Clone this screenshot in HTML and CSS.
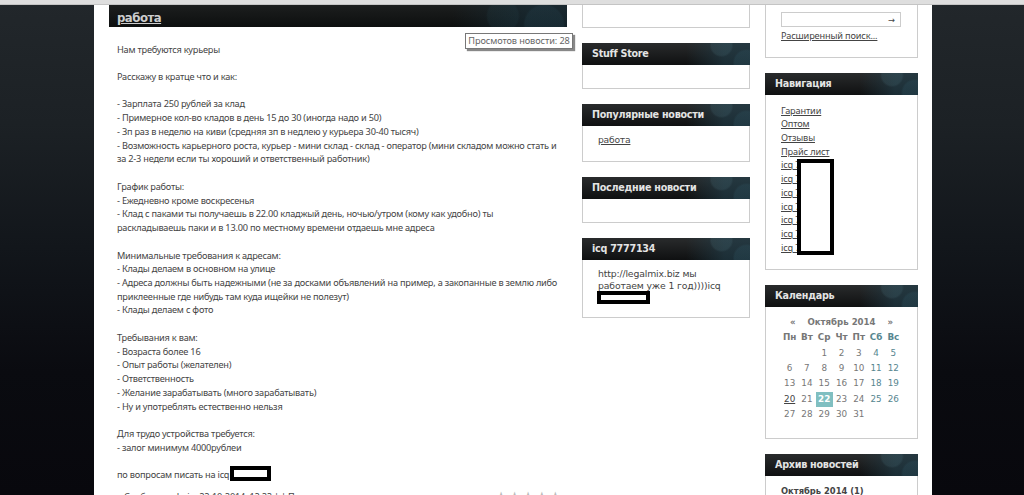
FILE: index.html
```html
<!DOCTYPE html>
<html lang="ru">
  <head>
    <meta charset="UTF-8" />
    <title>работа</title>
    <link rel="stylesheet" href="styles.css">
  </head>
  <body>
    <div class="topbar"></div>
    <div class="page">
      <div class="content">
        <h1 class="bar title"><a href="#">работа</a></h1>
        <div class="story">
          <p>Нам требуются курьеры</p>
          <p>Расскажу в кратце что и как:</p>
          <p>- Зарплата 250 рублей за клад<br>
          - Примерное кол-во кладов в день 15 до 30 (иногда надо и 50)<br>
          - Зп раз в неделю на киви (средняя зп в недлею у курьера 30-40 тысяч)<br>
          - Возможность карьерного роста, курьер - мини склад - склад - оператор (мини складом можно стать и<br>
          за 2-3 недели если ты хороший и ответственный работник)</p>
          <p>График работы:<br>
          - Ежедневно кроме воскресенья<br>
          - Клад с паками ты получаешь в 22.00 кладжый день, ночью/утром (кому как удобно) ты<br>
          раскладываешь паки и в 13.00 по местному времени отдаешь мне адреса</p>
          <p>Минимальные требования к адресам:<br>
          - Клады делаем в основном на улице<br>
          - Адреса должны быть надежными (не за досками объявлений на пример, а закопанные в землю либо<br>
          приклеенные где нибудь там куда ищейки не полезут)<br>
          - Клады делаем с фото</p>
          <p>Требывания к вам:<br>
          - Возраста более 16<br>
          - Опыт работы (желателен)<br>
          - Ответственность<br>
          - Желание зарабатывать (много зарабатывать)<br>
          - Ну и употреблять естественно нельзя</p>
          <p>Для трудо устройства требуется:<br>
          - залог минимум 4000рублеи</p>
          <p class="contact">по вопросам писать на icq <span class="blank"></span></p>
        </div>
        <div class="info">
          <span>Сообщил: admin, 22-10-2014, 12:22 | | Пр</span>
          <span class="stars">★★★★★</span>
        </div>
        <div class="tooltip">Просмотов новости: 28</div>
      </div>

      <div class="middle">
        <div class="block first"></div>
        <div class="block store">
          <h2 class="bar">Stuff Store</h2>
        </div>
        <div class="block popular">
          <h2 class="bar">Популярные новости</h2>
          <a href="#">работа</a>
        </div>
        <div class="block latest">
          <h2 class="bar">Последние новости</h2>
        </div>
        <div class="block about">
          <h2 class="bar">icq 7777134</h2>
          <p>http://legalmix.biz мы<br>работаем уже 1 год))))icq</p>
          <span class="blank"></span>
        </div>
      </div>

      <div class="right">
        <div class="block search">
          <div class="field">→</div>
          <a href="#">Расширенный поиск...</a>
        </div>
        <div class="block nav">
          <h2 class="bar">Навигация</h2>
          <ul>
            <li><a href="#">Гарантии</a></li>
            <li><a href="#">Оптом</a></li>
            <li><a href="#">Отзывы</a></li>
            <li><a href="#">Прайс лист</a></li>
            <li><a href="#">icq 7</a></li>
            <li><a href="#">icq 7</a></li>
            <li><a href="#">icq 7</a></li>
            <li><a href="#">icq 7</a></li>
            <li><a href="#">icq 7</a></li>
            <li><a href="#">icq 7</a></li>
            <li><a href="#">icq 7</a></li>
          </ul>
          <div class="cover"></div>
        </div>
        <div class="block calendar">
          <h2 class="bar">Календарь</h2>
          <div class="month"><b>«</b><b>Октябрь 2014</b><b>»</b></div>
          <table>
            <tr><th>Пн</th><th>Вт</th><th>Ср</th><th>Чт</th><th>Пт</th><th class="off">Сб</th><th class="off">Вс</th></tr>
            <tr><td></td><td></td><td>1</td><td>2</td><td>3</td><td class="off">4</td><td class="off">5</td></tr>
            <tr><td>6</td><td>7</td><td>8</td><td>9</td><td>10</td><td class="off">11</td><td class="off">12</td></tr>
            <tr><td>13</td><td>14</td><td>15</td><td>16</td><td>17</td><td class="off">18</td><td class="off">19</td></tr>
            <tr><td><a href="#">20</a></td><td>21</td><td class="today">22</td><td>23</td><td>24</td><td class="off">25</td><td class="off">26</td></tr>
            <tr><td>27</td><td>28</td><td>29</td><td>30</td><td>31</td><td></td><td></td></tr>
          </table>
        </div>
        <div class="block archive">
          <h2 class="bar">Архив новостей</h2>
          <b>Октябрь 2014 (1)</b>
        </div>
      </div>
    </div>
  </body>
</html>
```

FILE: styles.css
```css
* {
  box-sizing: border-box;
}
body {
  margin: 0;
  height: 495px;
  overflow: hidden;
  background: linear-gradient(#22272b, #1c2125 25%, #12161b 50%, #0a0b10 75%, #08080d);
  font-family: "Noto Sans", "DejaVu Sans Condensed", sans-serif;
  font-size: 9.2px;
  letter-spacing: -0.22px;
  color: #444;
}
a {
  color: #444;
}
p,
h1,
h2,
ul {
  margin: 0;
  padding: 0;
}
.topbar {
  height: 5px;
  background: #dedede;
  border-bottom: 1px solid #c4c4c4;
}
.page {
  display: flex;
  width: 838px;
  height: 490px;
  margin-left: 94px;
  padding-left: 15px;
  background: #fff;
}
.bar {
  height: 22px;
  padding-left: 10px;
  background:
    radial-gradient(circle at 83% 10%, rgba(75, 110, 120, 0.22) 0 10px, transparent 12px),
    radial-gradient(circle at 98% 90%, rgba(50, 90, 105, 0.25) 0 12px, transparent 14px),
    linear-gradient(90deg, transparent 62%, rgba(35, 65, 78, 0.6) 85%),
    linear-gradient(#292b2c, #0f1011);
  color: #e4e4e4;
  font: bold 9.6px/22px "DejaVu Sans", sans-serif;
  letter-spacing: -0.25px;
}

/* article */
.content {
  position: relative;
  width: 458px;
  margin-right: 15px;
}
.title {
  padding-left: 8px;
  font: bold 13px/25px "DejaVu Sans Condensed", sans-serif;
  letter-spacing: -0.5px;
  background:
    radial-gradient(circle at 86% 50%, rgba(40, 75, 85, 0.16) 0 15px, transparent 17px),
    radial-gradient(circle at 95% 90%, rgba(45, 80, 95, 0.18) 0 19px, transparent 21px),
    linear-gradient(90deg, transparent 75%, rgba(25, 50, 62, 0.55) 92%),
    linear-gradient(#1c1e1e, #0d0f0f);
}
.title a {
  color: #ccc;
}
.story {
  padding: 15.5px 0 0 8px;
  line-height: 13.74px;
  white-space: nowrap;
}
.story p {
  margin-bottom: 13.74px;
}
.blank {
  display: inline-block;
  border: 4px solid #000;
  background: #fff;
}
.contact {
  display: flex;
  align-items: center;
  height: 14px;
}
.contact .blank {
  width: 41px;
  height: 15px;
  margin: -3px 0 0 1px;
}
.info {
  display: flex;
  justify-content: space-between;
  padding: 0 4px 0 15px;
  margin-top: -6px;
  line-height: 14px;
  white-space: nowrap;
}
.stars {
  color: #bbb;
  font: 13px/14px "DejaVu Sans", sans-serif;
  letter-spacing: 1.9px;
}
.tooltip {
  position: absolute;
  left: 356px;
  top: 28px;
  width: 108px;
  height: 16px;
  border: 1px solid #777;
  background: #fff;
  box-shadow: 2px 2px 1px #888;
  color: #666;
  letter-spacing: -0.1px;
  line-height: 14px;
  text-align: center;
  white-space: nowrap;
}

/* side columns */
.middle {
  width: 168px;
  margin-right: 15px;
}
.right {
  width: 153px;
}
.block {
  position: relative;
  margin-bottom: 15px;
  border: 1px solid #ccc;
  border-top: 0;
  white-space: nowrap;
}
.block .bar {
  margin: 0 -1px;
}
.first {
  height: 23px;
}
.store,
.latest {
  height: 46px;
}
.popular {
  height: 58px;
}
.popular a {
  display: block;
  padding: 8px 0 0 15px;
  font: 9.2px/12px "DejaVu Sans", sans-serif;
}
.about {
  height: 80px;
}
.about p {
  padding: 8px 0 0 15px;
  font: 9.3px/11.6px "DejaVu Sans", sans-serif;
  letter-spacing: -0.15px;
}
.about .blank {
  display: block;
  width: 53px;
  height: 13px;
  margin-left: 14px;
}
.search {
  height: 53px;
  padding: 7px 16px 0 15px;
}
.field {
  height: 15px;
  margin-bottom: 2px;
  padding-right: 5px;
  border: 1px solid #ccc;
  line-height: 13px;
  text-align: right;
}
.nav {
  height: 197px;
}
.nav ul {
  padding: 8.5px 0 0 15px;
  list-style: none;
  line-height: 13.74px;
}
.nav li,
.search a {
  letter-spacing: -0.15px;
}
.cover {
  position: absolute;
  left: 31px;
  top: 86px;
  width: 37px;
  height: 96px;
  border: 4px solid #000;
  background: #fff;
}
.calendar {
  height: 154px;
  color: #777;
  font-family: "DejaVu Sans", sans-serif;
  letter-spacing: 0;
}
.month {
  display: flex;
  justify-content: space-between;
  padding: 8px 24px 0;
  font-size: 8.6px;
  line-height: 15px;
}
.calendar table {
  width: 121px;
  margin-left: 15px;
  border-collapse: collapse;
  table-layout: fixed;
}
.calendar td,
.calendar th {
  height: 15.4px;
  padding: 0;
  font-size: 8.8px;
  line-height: 15px;
  text-align: center;
}
.calendar .off {
  color: #56868f;
}
.calendar .today {
  background: #80bfc1;
  color: #fff;
  font-weight: bold;
}
.archive {
  height: 60px;
}
.archive b {
  display: block;
  padding: 8px 0 0 15px;
  font: bold 9.3px/13px "DejaVu Sans Condensed", sans-serif;
  letter-spacing: 0;
}
```
